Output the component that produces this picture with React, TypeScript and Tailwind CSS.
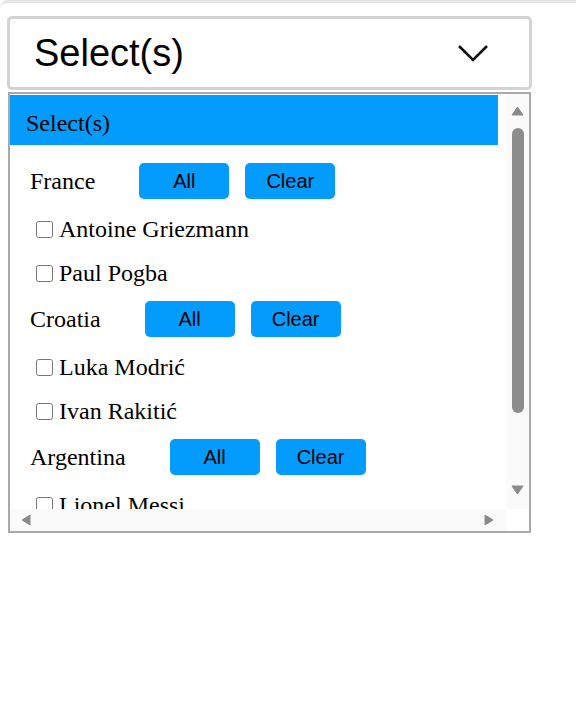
import React, { useState } from "react";

const GROUPS = [
  { country: "France", players: ["Antoine Griezmann", "Paul Pogba"] },
  { country: "Croatia", players: ["Luka Modrić", "Ivan Rakitić"] },
  { country: "Argentina", players: ["Lionel Messi", "Ángel Di María"] },
];

function Tri({ dir }: { dir: "up" | "down" | "left" | "right" }) {
  const pts = {
    up: "1,9 6.5,1 12,9",
    down: "1,1 6.5,9 12,1",
    left: "9,1 1,6 9,11",
    right: "1,1 9,6 1,11",
  }[dir];
  const horiz = dir === "left" || dir === "right";
  return (
    <svg width={horiz ? 10 : 13} height={horiz ? 12 : 10} viewBox={horiz ? "0 0 10 12" : "0 0 13 10"}>
      <polygon points={pts} fill="#8a8a8a" stroke="#8a8a8a" strokeWidth="1" strokeLinejoin="round" />
    </svg>
  );
}

export default function App() {
  const [checked, setChecked] = useState<Record<string, boolean>>({});

  const setGroup = (players: string[], v: boolean) => {
    const next = { ...checked };
    players.forEach((p) => (next[p] = v));
    setChecked(next);
  };

  return (
    <div className="min-h-[715px] bg-white border-t-[3px] border-[#e4e4e4] rounded-tl-[8px]">
      <div className="pt-[13px] pl-[7px]">
        {/* trigger */}
        <div className="w-[525px] h-[74px] border-[3px] border-[#d3d3d3] rounded-[5px] flex items-center justify-between pl-[24px] pr-[40px] bg-white">
          <span className="text-[38px] text-black" style={{ fontFamily: '"Liberation Sans", Arial, sans-serif' }}>
            Select(s)
          </span>
          <svg width="32" height="20" viewBox="0 0 32 20">
            <polyline points="2,3 16,17 30,3" fill="none" stroke="#111" strokeWidth="2.6" />
          </svg>
        </div>

        {/* dropdown panel */}
        <div className="mt-[2px] ml-[1px] w-[523px] h-[441px] border-2 border-[#a9a9a9] flex flex-col bg-white">
          <div className="flex flex-1 min-h-0">
            <div
              className="flex-1 overflow-hidden pt-[1px]"
              style={{ fontFamily: '"Liberation Serif", "Times New Roman", serif' }}
            >
              <div className="h-[50px] mr-[8px] bg-[#039cfd] flex items-center pl-[16px] pt-[5px] text-[24px] text-black">
                Select(s)
              </div>
              <div className="pt-[12px]">
                {GROUPS.map((g) => (
                  <div key={g.country}>
                    <div className="flex items-center pl-[20px] h-[36px] mt-[6px] mb-[8px]">
                      <span className="text-[24px] text-black">{g.country}</span>
                      <button
                        onClick={() => setGroup(g.players, true)}
                        className="ml-[44px] w-[90px] h-[36px] rounded-[5px] bg-[#039cfd] text-black text-[20px]"
                        style={{ fontFamily: '"Liberation Sans", Arial, sans-serif' }}
                      >
                        All
                      </button>
                      <button
                        onClick={() => setGroup(g.players, false)}
                        className="ml-[16px] w-[90px] h-[36px] rounded-[5px] bg-[#039cfd] text-black text-[20px]"
                        style={{ fontFamily: '"Liberation Sans", Arial, sans-serif' }}
                      >
                        Clear
                      </button>
                    </div>
                    {g.players.map((p) => (
                      <label key={p} className="flex items-center h-[44px] pl-[26px] text-[24px] text-black">
                        <input
                          type="checkbox"
                          checked={!!checked[p]}
                          onChange={(e) => setChecked({ ...checked, [p]: e.target.checked })}
                          className="w-[17px] h-[17px] m-0 mr-[6px]"
                        />
                        {p}
                      </label>
                    ))}
                  </div>
                ))}
              </div>
            </div>
            {/* vertical scrollbar */}
            <div className="w-[23px] bg-[#fafafa] flex flex-col items-center pt-[12px] pb-[14px]">
              <Tri dir="up" />
              <div className="mt-[12px] w-[12px] h-[285px] rounded-full bg-[#8c8c8c]" />
              <div className="flex-1" />
              <Tri dir="down" />
            </div>
          </div>
          {/* horizontal scrollbar */}
          <div className="h-[22px] flex">
            <div className="flex-1 bg-[#fafafa] flex items-center justify-between pl-[11px] pr-[12px]">
              <Tri dir="left" />
              <Tri dir="right" />
            </div>
            <div className="w-[23px] bg-white" />
          </div>
        </div>
      </div>
    </div>
  );
}
